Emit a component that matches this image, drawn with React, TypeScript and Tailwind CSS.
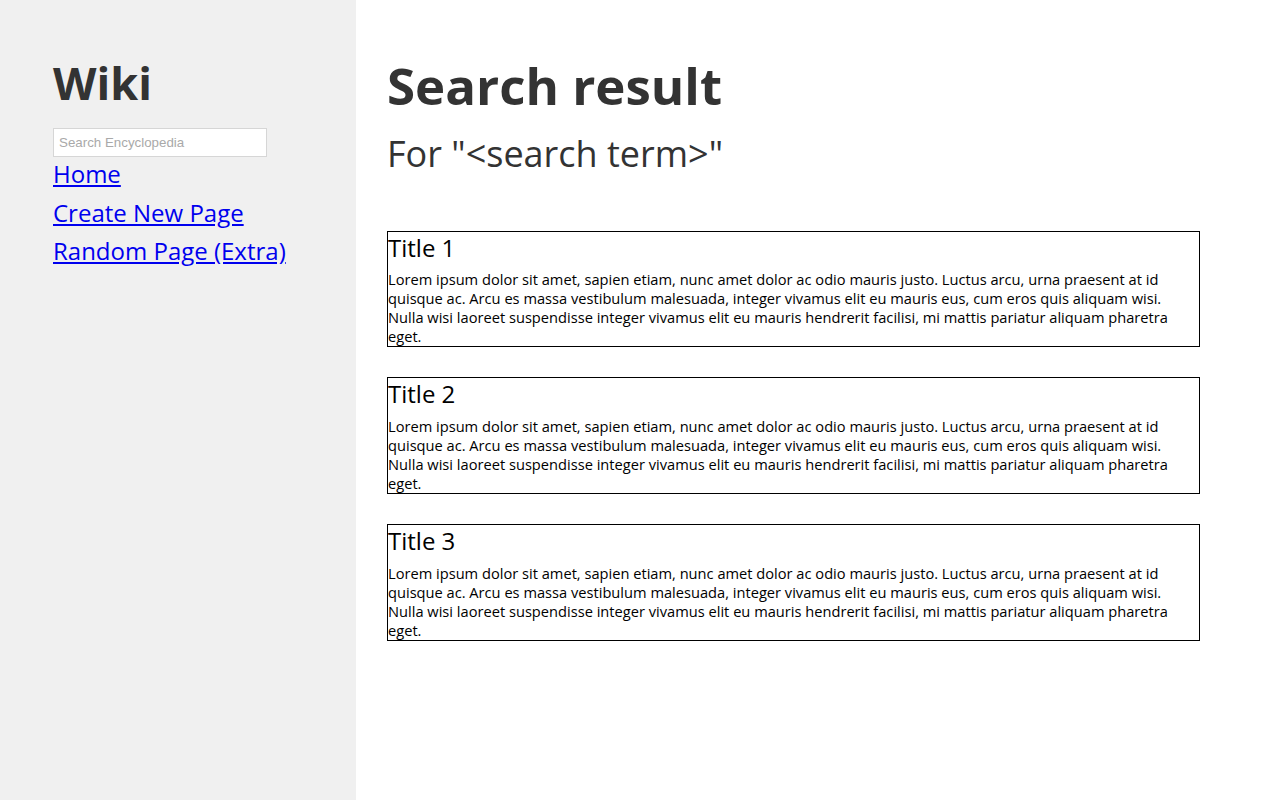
import React from "react";

const lorem =
  "Lorem ipsum dolor sit amet, sapien etiam, nunc amet dolor ac odio mauris justo. Luctus arcu, urna praesent at id quisque ac. Arcu es massa vestibulum malesuada, integer vivamus elit eu mauris eus, cum eros quis aliquam wisi. Nulla wisi laoreet suspendisse integer vivamus elit eu mauris hendrerit facilisi, mi mattis pariatur aliquam pharetra eget.";

export default function App() {
  return (
    <div
      className="flex w-full min-h-[800px] bg-white"
      style={{ fontFamily: '"Open Sans", sans-serif' }}
    >
      <aside className="w-[356px] shrink-0 bg-[#f0f0f0] pl-[53px] pt-[52px]">
        <h1 className="text-[45px] font-bold leading-[61px] text-[#333]">Wiki</h1>
        <input
          type="text"
          placeholder="Search Encyclopedia"
          className="mt-[15px] block h-[29px] w-[214px] border border-[#d6d6d6] bg-white px-[5px] text-[13.33px] text-black placeholder:text-[#a9a9a9] outline-none"
          style={{ fontFamily: '"Liberation Sans", Arial, sans-serif' }}
        />
        <nav className="mt-[1px] flex flex-col gap-[5.8px]">
          <a href="#" className="text-[24px] leading-[32.7px] text-[#0000ee] underline">Home</a>
          <a href="#" className="text-[24px] leading-[32.7px] text-[#0000ee] underline">Create New Page</a>
          <a href="#" className="text-[24px] leading-[32.7px] text-[#0000ee] underline">Random Page (Extra)</a>
        </nav>
      </aside>
      <main className="flex-1 pl-[31px] pr-[80px] pt-[51px]">
        <h1 className="text-[51px] font-bold leading-[69.5px] text-[#333]">Search result</h1>
        <h2 className="mt-[8px] text-[36px] leading-[49px] text-[#333]">For "&lt;search term&gt;"</h2>
        <div className="mt-[53px] flex flex-col gap-[30px]">
          {[1, 2, 3].map((n) => (
            <div key={n} className="border border-black text-black">
              <h3 className="text-[24px] leading-[32.7px]">Title {n}</h3>
              <p className="mt-[6px] pr-[5px] text-[14.65px] leading-[19px]">{lorem}</p>
            </div>
          ))}
        </div>
      </main>
    </div>
  );
}
